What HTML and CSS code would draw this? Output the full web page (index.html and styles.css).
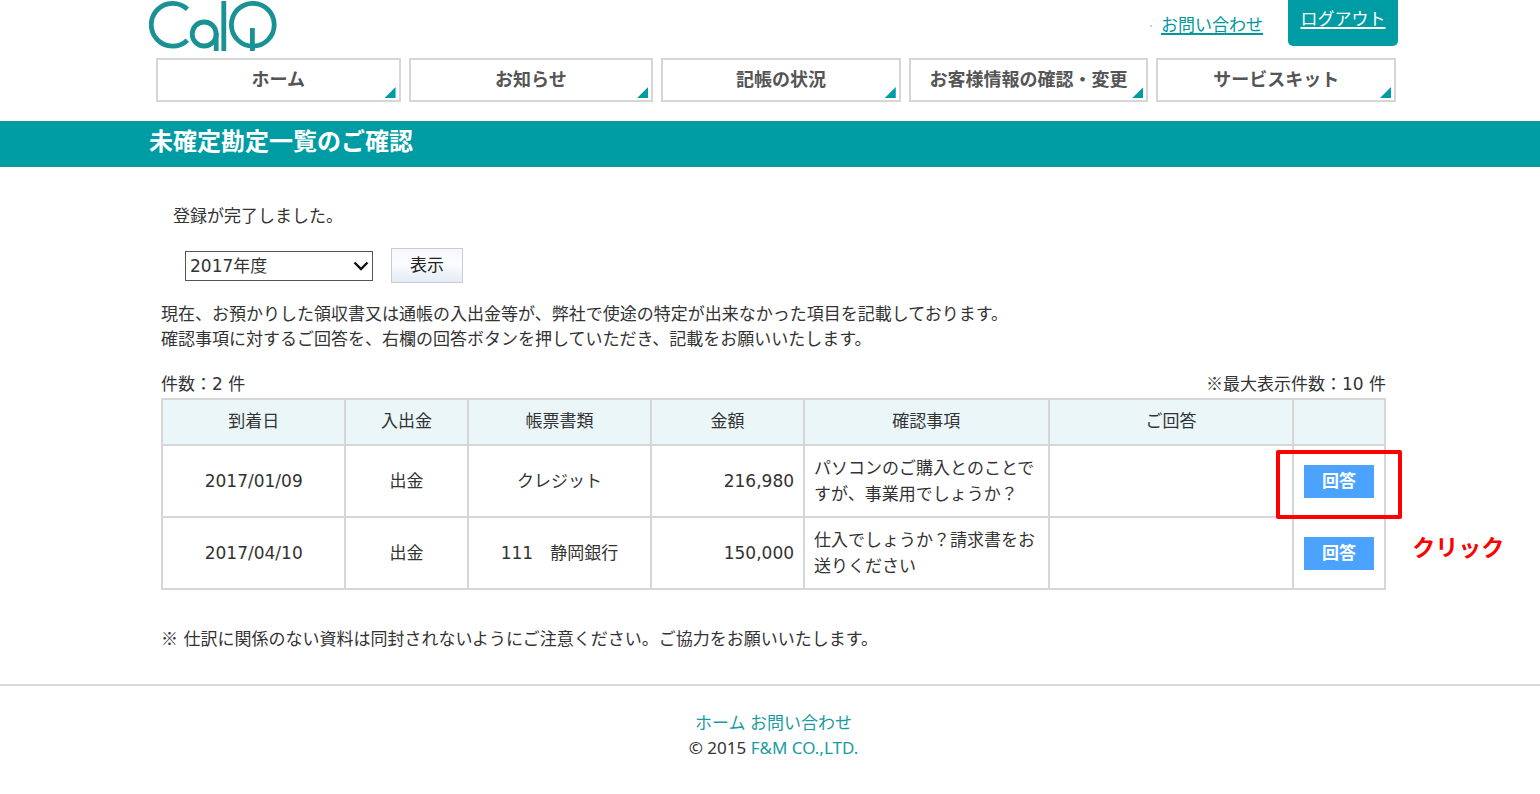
FILE: index.html
```html
<!DOCTYPE html>
<html lang="ja">
<head>
<meta charset="utf-8">
<title>未確定勘定一覧のご確認</title>
<link rel="stylesheet" href="styles.css">
</head>
<body>
<header class="wrap">
  <div class="top">
    <a class="logo" href="#" aria-label="CalQ">
      <svg width="128" height="52" viewBox="1 0 128 52" fill="none" stroke="#1a9295" stroke-width="4.8">
        <path d="M39.4 9.2A21.4 21.4 0 1 0 39.4 40.2"/>
        <circle cx="56.2" cy="34" r="12"/>
        <path d="M68.2 33V51M75.8 1V51M104.4 28V51"/>
        <circle cx="104.8" cy="24.7" r="21.4"/>
      </svg>
    </a>
    <div class="links">
      <a class="contact" href="#">お問い合わせ</a>
      <a class="logout" href="#">ログアウト</a>
    </div>
  </div>
  <nav class="nav">
    <a class="wide" href="#">ホーム</a>
    <a class="wide" href="#">お知らせ</a>
    <a href="#">記帳の状況</a>
    <a href="#">お客様情報の確認・変更</a>
    <a href="#">サービスキット</a>
  </nav>
</header>
<div class="banner"><div class="wrap"><h1>未確定勘定一覧のご確認</h1></div></div>
<main class="wrap">
  <div class="content">
    <p class="done">登録が完了しました。</p>
    <form class="filter">
      <div class="picker">
        <select aria-label="年度"><option>2017年度</option></select>
        <svg width="16" height="10" viewBox="0 0 16 10" fill="none" stroke="#111" stroke-width="2.4"><path d="M1.5 1.5L8 8L14.5 1.5"/></svg>
      </div>
      <button class="show" type="button">表示</button>
    </form>
    <p class="lead">現在、お預かりした領収書又は通帳の入出金等が、弊社で使途の特定が出来なかった項目を記載しております。<br>確認事項に対するご回答を、右欄の回答ボタンを押していただき、記載をお願いいたします。</p>
    <div class="counts"><span>件数：2 件</span><span><span class="jp">※</span>最大表示件数：10 件</span></div>
    <table class="list">
      <colgroup><col class="c-date"><col class="c-type"><col class="c-doc"><col class="c-sum"><col class="c-ask"><col class="c-reply"><col class="c-act"></colgroup>
      <thead>
        <tr><th>到着日</th><th>入出金</th><th>帳票書類</th><th>金額</th><th>確認事項</th><th>ご回答</th><th></th></tr>
      </thead>
      <tbody>
        <tr><td>2017/01/09</td><td>出金</td><td>クレジット</td><td class="num">216,980</td><td class="ask">パソコンのご購入とのことですが、事業用でしょうか？</td><td></td><td class="act"><button class="reply" type="button">回答</button><div class="mark"></div><div class="hint">クリック</div></td></tr>
        <tr><td>2017/04/10</td><td>出金</td><td>111　静岡銀行</td><td class="num">150,000</td><td class="ask">仕入でしょうか？請求書をお送りください</td><td></td><td class="act"><button class="reply" type="button">回答</button></td></tr>
      </tbody>
    </table>
    <p class="note"><span class="jp">※</span> 仕訳に関係のない資料は同封されないようにご注意ください。ご協力をお願いいたします。</p>
  </div>
</main>
<footer class="footer">
  <div class="wrap">
    <div><a href="#">ホーム</a> <a href="#">お問い合わせ</a></div>
    <div>© 2015 <a href="#">F&amp;M CO.,LTD.</a></div>
  </div>
</footer>
</body>
</html>
```
FILE: styles.css
```css
* { box-sizing: border-box; }
body {
  margin: 0;
  background: #fff;
  color: #333;
  font: 17px/25px "DejaVu Sans", "Noto Sans CJK JP", sans-serif;
}
p, h1 { margin: 0; }
.jp { font-family: "Noto Sans CJK JP", sans-serif; line-height: 1; }
.wrap { max-width: 1256px; margin: 0 auto; padding-left: 7px; }

.top { display: flex; justify-content: space-between; height: 58px; }
.logo { display: block; height: 52px; }
.links { display: flex; align-items: flex-start; gap: 25px; }
.contact { color: #00979c; padding-top: 13px; }
.contact::before {
  content: "";
  display: inline-block;
  width: 2px;
  height: 2px;
  margin-right: 9px;
  vertical-align: middle;
  background: #ccc;
}
.logout {
  width: 110px;
  height: 46px;
  padding-top: 7px;
  border-radius: 0 0 5px 5px;
  background: #009ca3;
  color: #fff;
  text-align: center;
}
.contact, .logout { text-decoration-thickness: 2px; text-underline-offset: 2px; }

.nav { display: flex; gap: 8px; padding: 0 2px 0 7px; }
.nav a {
  position: relative;
  flex: 240 1 0;
  height: 44px;
  border: 2px solid #d6d6d6;
  color: #555;
  font-size: 18px;
  font-weight: bold;
  line-height: 39px;
  text-align: center;
  text-decoration: none;
  white-space: nowrap;
}
.nav .wide { flex-grow: 245; }
.nav a::after {
  content: "";
  position: absolute;
  right: 3px;
  bottom: 2px;
  width: 11px;
  height: 11px;
  background: #009ca3;
  clip-path: polygon(100% 0, 100% 100%, 0 100%);
}

.banner { margin-top: 19px; background: #009ca3; }
.banner h1 { color: #fff; font-size: 24px; line-height: 42px; padding-bottom: 4px; }

.content { padding: 37px 12px 0; }
.done { padding-left: 12px; }
.filter { display: flex; align-items: center; gap: 18px; padding: 19px 0 19px 24px; }
.picker { position: relative; }
.picker select {
  display: block;
  width: 188px;
  height: 30px;
  padding: 0 24px 0 4px;
  border: 1px solid #555;
  border-radius: 0;
  appearance: none;
  background: #fff;
  color: #333;
  font: inherit;
  line-height: 26px;
}
.picker svg { position: absolute; right: 4px; top: 10px; }
.show {
  width: 72px;
  height: 35px;
  padding: 0;
  border: 1px solid #ccc;
  background: linear-gradient(#f4f8fd, #fafcff 45%, #e3ebf6);
  color: #222;
  font: inherit;
}
.counts { display: flex; align-items: baseline; justify-content: space-between; padding: 20px 0 1px; }

.list { width: 100%; border-collapse: collapse; table-layout: fixed; }
.list th, .list td { border: 2px solid #d6d6d6; text-align: center; font-weight: normal; }
.list th { height: 46px; padding: 0 0 2px; background: #eaf6f8; }
.list td { height: 72px; padding: 0 9px 1px; line-height: 26px; }
.list .num { text-align: right; }
.list .ask { text-align: left; }
.list .act { position: relative; padding: 0; }
.c-date { width: 15%; }
.c-type { width: 10%; }
.c-doc { width: 15%; }
.c-sum { width: 12.5%; }
.c-ask { width: 20%; }
.c-reply { width: 20%; }
.c-act { width: 7.5%; }
.reply {
  width: 70px;
  height: 33px;
  padding: 0;
  border: 0;
  background: #4ba3ff;
  color: #fff;
  font: inherit;
  font-weight: bold;
}
.mark { position: absolute; inset: 4px -18px -3px; border: 4px solid #f00; border-radius: 2px; pointer-events: none; }
.hint {
  position: absolute;
  left: 118px;
  top: 89px;
  color: #f00;
  font-size: 23px;
  font-weight: bold;
  white-space: nowrap;
}

.note { padding: 37px 0 32px; }
.footer {
  padding: 24px 0 36px;
  border-top: 2px solid #d9d9d9;
  font-family: "Noto Sans", "Noto Sans CJK JP", sans-serif;
  text-align: center;
}
.footer a { color: #1a9c9f; text-decoration: none; }
```
